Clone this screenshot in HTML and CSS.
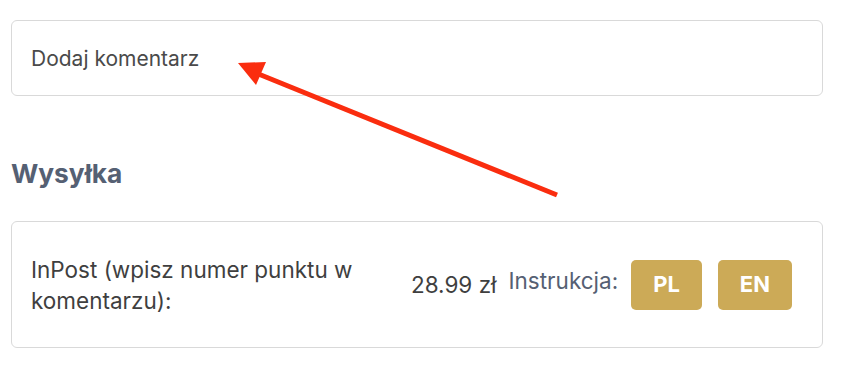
FILE: index.html
```html
<!DOCTYPE html>
<html lang="pl">
<head>
<meta charset="utf-8">
<title>Wysyłka</title>
<link rel="stylesheet" href="styles.css">
</head>
<body>
<div class="page">
  <div class="card comment">Dodaj komentarz</div>
  <h2 class="section-title">Wysyłka</h2>
  <div class="card shipping">
    <div class="ship-name">InPost (wpisz numer punktu w komentarzu):</div>
    <div class="ship-price">28.99 zł</div>
    <div class="ship-instr">Instrukcja:</div>
    <div class="btns">
      <a class="btn">PL</a>
      <a class="btn">EN</a>
    </div>
  </div>
  <svg class="arrow" width="850" height="370" viewBox="0 0 850 370" aria-hidden="true">
    <line x1="557" y1="195" x2="256" y2="73" stroke="#fa2d0f" stroke-width="5"/>
    <polygon points="238,63 266,62 256,85" fill="#fa2d0f"/>
  </svg>
</div>
</body>
</html>
```

FILE: styles.css
```css
html, body {
  margin: 0;
  padding: 0;
  background: #ffffff;
}
body {
  font-family: Inter, "Noto Sans", "Liberation Sans", sans-serif;
  color: #3f3f3f;
}
.page {
  position: relative;
  width: 812px;
  padding: 20px 27px 0 11px;
}
.card {
  border: 1px solid #d9d9d9;
  border-radius: 6px;
  box-sizing: border-box;
}
.comment {
  height: 76px;
  display: flex;
  align-items: center;
  padding: 0 19px;
  font-size: 21px;
  color: #4a4a4a;
}
.section-title {
  margin: 0;
  padding-top: 60px;
  padding-bottom: 29px;
  font-size: 26.3px;
  line-height: 36px;
  font-weight: 700;
  color: #556073;
}
.shipping {
  height: 127px;
  display: flex;
  align-items: center;
  padding: 0 30px 0 19px;
  font-size: 22.5px;
  line-height: 31px;
}
.ship-name {
  width: 350px;
  color: #3f3f3f;
}
.ship-price {
  margin-left: auto;
  color: #3f3f3f;
}
.ship-instr {
  margin-left: 12px;
  margin-bottom: 8px;
  color: #556073;
}
.btns {
  display: flex;
  gap: 16px;
  margin-left: 13px;
}
.btn {
  display: flex;
  align-items: center;
  justify-content: center;
  height: 50px;
  padding: 0 22px;
  background: #ccaa57;
  color: #ffffff;
  font-weight: 700;
  font-size: 22px;
  border-radius: 5px;
}
.arrow {
  position: absolute;
  left: 0;
  top: 0;
}
```
